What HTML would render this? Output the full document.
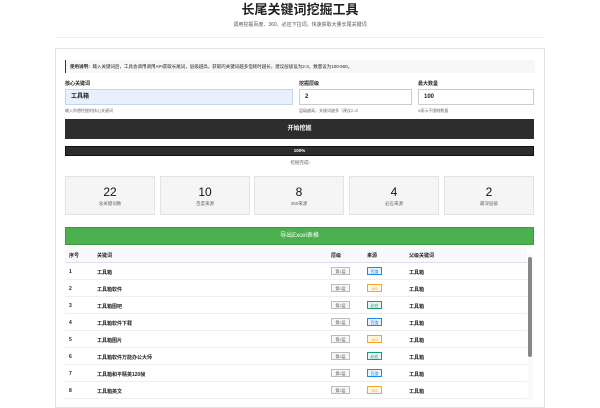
<!DOCTYPE html>
<html><head><meta charset="utf-8"><style>
*{margin:0;padding:0;box-sizing:border-box}
body{width:600px;height:400px;overflow:hidden;background:#fff;font-family:"Liberation Sans","Noto Sans CJK SC",sans-serif;color:#222;position:relative}
.a{position:absolute}
.t{left:0;width:600px;text-align:center}
.card{left:55px;top:48px;width:490px;height:360px;border:1px solid #e2e2e2;background:#fff}
.inp{border:1px solid #ccc;height:16px;font-size:6px;font-weight:bold;padding-left:5px;line-height:14px}
.lbl{font-size:5px;font-weight:bold}
.hint{font-size:4px;color:#666}
.stat{top:176px;width:90px;height:39px;background:#f5f5f5;border:1px solid #e3e3e3;text-align:center}
.stat b{display:block;font-size:12px;font-weight:normal;margin-top:9px;line-height:13px;color:#111}
.stat span{display:block;font-size:4.5px;color:#666;line-height:6px;margin-top:2px}
.row{left:65px;width:462px;height:17px;border-bottom:1px solid #eee;font-size:5px;font-weight:bold}
.row div{position:absolute;top:6px}
.lv{border:1px solid #bbb;background:#f7f7f7;color:#555;font-size:4px;width:19px;text-align:center;top:4px!important;height:8px;line-height:7px;font-weight:normal}
.src{font-size:4px;width:15px;text-align:center;height:8px;line-height:7px;top:4px!important;font-weight:normal;border:1px solid}
.bd{color:#1e88e5;border-color:#1e88e5;background:#e8f2fd}
.s3{color:#f5a623;border-color:#f5a623;background:#fff7e6}
.sg{color:#199a7a;border-color:#199a7a;background:#e6f6f1}
</style></head><body>
<div class="a t" style="top:3px;font-size:13px;font-weight:bold;line-height:14px">长尾关键词挖掘工具</div>
<div class="a t" style="top:21px;font-size:5px;color:#555">调用挖掘百度、360、必应下拉词，快速获取大量长尾关键词</div>
<div class="a" style="left:55px;top:37px;width:490px;height:1px;background:#eee"></div>
<div class="a card"></div>
<div class="a" style="left:65px;top:60px;width:470px;height:13px;background:#f7f7f7;border-left:1px solid #333;font-size:4.5px;line-height:13px;padding-left:4px"><b>使用说明：</b>输入关键词后，工具会调用调用API获取长尾词，层级越高，获取的关键词越多但耗时越长，建议层级设为2-3，数量设为100-500。</div>
<div class="a lbl" style="left:65px;top:80px">核心关键词</div>
<div class="a lbl" style="left:299px;top:80px">挖掘层级</div>
<div class="a lbl" style="left:418px;top:80px">最大数量</div>
<div class="a inp" style="left:65px;top:89px;width:228px;background:#e8f0fe;border-color:#c8d4ea">工具箱</div>
<div class="a inp" style="left:299px;top:89px;width:113px">2</div>
<div class="a inp" style="left:418px;top:89px;width:116px">100</div>
<div class="a hint" style="left:65px;top:108px">输入你想挖掘的核心关键词</div>
<div class="a hint" style="left:299px;top:108px">层级越高，关键词越多（建议2-3）</div>
<div class="a hint" style="left:418px;top:108px">0表示不限制数量</div>
<div class="a" style="left:65px;top:119px;width:469px;height:20px;background:#2d2d2d;color:#fff;font-size:6px;font-weight:bold;text-align:center;line-height:20px">开始挖掘</div>
<div class="a" style="left:65px;top:146px;width:469px;height:10px;background:#2d2d2d;border:1px solid #111;color:#fff;font-size:4.5px;font-weight:bold;text-align:center;line-height:8px">100%</div>
<div class="a t" style="top:160px;font-size:4.5px;color:#666">挖掘完成!</div>
<div class="a stat" style="left:65px"><b>22</b><span>总关键词数</span></div>
<div class="a stat" style="left:160px"><b>10</b><span>百度来源</span></div>
<div class="a stat" style="left:254px"><b>8</b><span>360来源</span></div>
<div class="a stat" style="left:349px"><b>4</b><span>必应来源</span></div>
<div class="a stat" style="left:444px"><b>2</b><span>最深层级</span></div>
<div class="a" style="left:65px;top:227px;width:469px;height:18px;background:#4caf50;border:1px solid #3a9a3e;color:#fff;font-size:6px;text-align:center;line-height:16px">导出Excel表格</div>
<div class="a" style="left:65px;top:246px;width:462px;height:17px;background:#f8f9fa;border-bottom:1px solid #dde;font-size:5px;font-weight:bold">
<div class="a" style="left:4px;top:6px">序号</div><div class="a" style="left:32px;top:6px">关键词</div><div class="a" style="left:266px;top:6px">层级</div><div class="a" style="left:302px;top:6px">来源</div><div class="a" style="left:344px;top:6px">父级关键词</div></div>
<div class="a" style="left:528px;top:254px;width:5px;height:146px;background:#fafafa"><div style="margin-top:3px;width:4px;height:100px;background:#888;border-radius:2px"></div></div>
<div class="a row" style="top:263px"><div style="left:4px">1</div><div style="left:32px">工具箱</div><div class="lv" style="left:266px">第1层</div><div class="src bd" style="left:302px">百度</div><div style="left:344px">工具箱</div></div>
<div class="a row" style="top:280px"><div style="left:4px">2</div><div style="left:32px">工具箱软件</div><div class="lv" style="left:266px">第2层</div><div class="src s3" style="left:302px">360</div><div style="left:344px">工具箱</div></div>
<div class="a row" style="top:297px"><div style="left:4px">3</div><div style="left:32px">工具箱图吧</div><div class="lv" style="left:266px">第2层</div><div class="src sg" style="left:302px">必应</div><div style="left:344px">工具箱</div></div>
<div class="a row" style="top:314px"><div style="left:4px">4</div><div style="left:32px">工具箱软件下载</div><div class="lv" style="left:266px">第2层</div><div class="src bd" style="left:302px">百度</div><div style="left:344px">工具箱</div></div>
<div class="a row" style="top:331px"><div style="left:4px">5</div><div style="left:32px">工具箱图片</div><div class="lv" style="left:266px">第2层</div><div class="src s3" style="left:302px">360</div><div style="left:344px">工具箱</div></div>
<div class="a row" style="top:348px"><div style="left:4px">6</div><div style="left:32px">工具箱软件万能办公大师</div><div class="lv" style="left:266px">第2层</div><div class="src sg" style="left:302px">必应</div><div style="left:344px">工具箱</div></div>
<div class="a row" style="top:365px"><div style="left:4px">7</div><div style="left:32px">工具箱和平精英120帧</div><div class="lv" style="left:266px">第2层</div><div class="src bd" style="left:302px">百度</div><div style="left:344px">工具箱</div></div>
<div class="a row" style="top:382px"><div style="left:4px">8</div><div style="left:32px">工具箱英文</div><div class="lv" style="left:266px">第2层</div><div class="src s3" style="left:302px">360</div><div style="left:344px">工具箱</div></div>
</body></html>
